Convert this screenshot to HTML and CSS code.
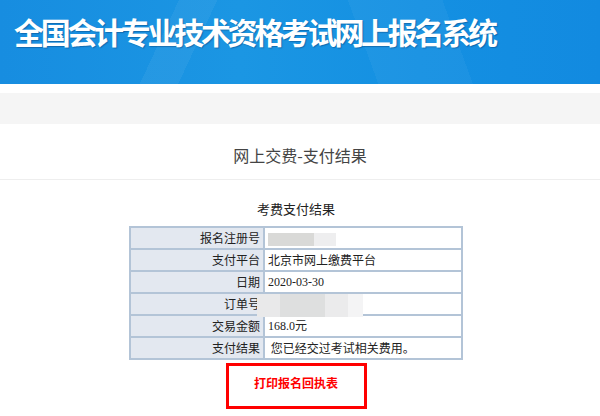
FILE: index.html
```html
<!DOCTYPE html>
<html lang="zh-CN">
<head>
<meta charset="utf-8">
<title>全国会计专业技术资格考试网上报名系统</title>
<link rel="stylesheet" href="styles.css">
</head>
<body>
<header class="banner">
  <h1 class="banner-title">全国会计专业技术资格考试网上报名系统</h1>
</header>
<div class="gap"></div>
<div class="nav-band"></div>
<main class="main">
  <div class="page-head">网上交费-支付结果</div>
  <section class="result">
    <div class="result-title">考费支付结果</div>
    <table class="info">
      <tr><th>报名注册号</th><td><span class="blur blur-a"><i class="b1"></i><i class="b2"></i></span></td></tr>
      <tr><th>支付平台</th><td>北京市网上缴费平台</td></tr>
      <tr><th>日期</th><td class="num">2020-03-30</td></tr>
      <tr><th>订单号</th><td></td></tr>
      <tr><th>交易金额</th><td class="num">168.0元</td></tr>
      <tr><th>支付结果</th><td>&nbsp;您已经交过考试相关费用。</td></tr>
    </table>
    <div class="print-box"><span class="print-link">打印报名回执表</span></div>
  </section>
</main>
<div class="blur-order"><i class="o1"></i><i class="o2"></i><i class="o3"></i><i class="o4"></i></div>
</body>
</html>
```
FILE: styles.css
```css
* { box-sizing: border-box; }
html, body { margin: 0; padding: 0; background: #fff; }
body {
  font-family: "Noto Sans CJK SC", "Noto Sans", sans-serif;
  color: #333;
  width: 600px;
  height: 416px;
  overflow: hidden;
  position: relative;
}
.banner {
  height: 84px;
  background:
    linear-gradient(115deg, rgba(255,255,255,0) 0 28%, rgba(255,255,255,0.05) 28% 34%, rgba(255,255,255,0) 34% 100%),
    linear-gradient(70deg, rgba(255,255,255,0) 0 60%, rgba(255,255,255,0.04) 60% 75%, rgba(255,255,255,0) 75% 100%),
    linear-gradient(90deg, #178de0 0%, #1b96e3 40%, #1490e2 70%, #128ae0 100%);
  display: flex;
  align-items: flex-start;
  padding: 12px 0 0 14px;
}
.banner-title {
  margin: 0;
  font-size: 30px;
  line-height: 38px;
  font-weight: 700;
  color: #fff;
  letter-spacing: -3.3px;
  text-shadow: 1px 1px 1px rgba(0,40,90,0.35);
}
.gap { height: 9px; background: #fff; }
.nav-band { height: 31px; background: #f5f5f5; }
.main { width: 592px; }
.page-head {
  height: 56px;
  border-bottom: 1px solid #eeeeee;
  display: flex;
  align-items: center;
  justify-content: center;
  font-size: 16px;
  color: #444;
  padding-top: 6px;
  width: 600px;
}
.result {
  display: flex;
  flex-direction: column;
  align-items: center;
}
.result-title {
  font-size: 13px;
  line-height: 18px;
  margin-top: 20px;
  margin-bottom: 8px;
  color: #222;
}
.info {
  border-collapse: collapse;
  width: 334px;
  font-size: 12px;
}
.info th, .info td {
  border: 2px solid #b3c4d7;
  height: 22px;
  padding: 0 3px;
  font-weight: 400;
  line-height: 16px;
  color: #222;
  white-space: nowrap;
}
.info th {
  width: 134px;
  text-align: right;
  background: #e3e8f0;
}
.info td { text-align: left; background: #fff; }
.info td.num { font-family: "Liberation Serif", "Noto Sans CJK SC", serif; font-size: 12px; }
.blur { display: inline-flex; vertical-align: middle; height: 13px; }
.blur i { display: block; height: 13px; }
.blur-a .b1 { width: 46px; background: #d9d9d7; }
.blur-a .b2 { width: 22px; background: #eeeeef; }
.print-box {
  margin-top: 3px;
  width: 141px;
  height: 46px;
  border: 3px solid #ff0000;
  display: flex;
  justify-content: center;
  padding-top: 9px;
}
.print-link {
  color: #ff0000;
  font-weight: 700;
  font-size: 12px;
  line-height: 16px;
}
.blur-order {
  position: absolute;
  left: 257px;
  top: 294px;
  height: 23px;
  display: flex;
}
.blur-order i { display: block; height: 23px; }
.blur-order .o1 { width: 23px; background: #e9e9ea; }
.blur-order .o2 { width: 45px; background: #dedfdf; }
.blur-order .o3 { width: 23px; background: #ebebec; }
.blur-order .o4 { width: 15px; background: #f4f4f5; }
```
